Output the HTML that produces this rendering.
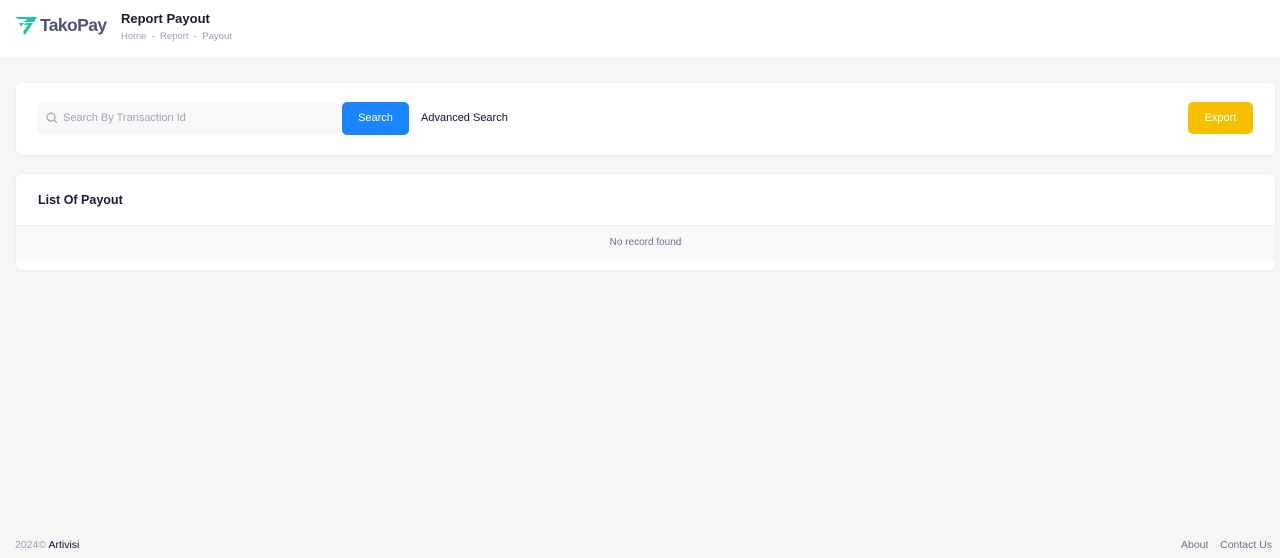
<!DOCTYPE html>
<html><head><style>
*{box-sizing:border-box;margin:0;padding:0}
body{width:1280px;height:558px;background:#f7f5f6;font-family:"Liberation Sans",sans-serif;position:relative;overflow:hidden}
.hdr{position:absolute;left:0;top:0;width:1280px;height:57px;background:#fff}
.logo{position:absolute;left:15px;top:15px}
.logotxt{position:absolute;left:40px;top:15px;font-size:17.5px;color:#4a5578;letter-spacing:-0.6px;font-weight:bold}
.title{position:absolute;left:121px;top:11px;font-size:13px;font-weight:bold;color:#181c32}
.bc{position:absolute;left:121px;top:31px;font-size:9.5px;color:#99a1b7}
.card1{position:absolute;left:16px;top:83px;width:1259px;height:72px;background:#fff;border-radius:6px;box-shadow:0 1px 3px rgba(0,0,0,.06)}
.inp{position:absolute;left:21px;top:19px;width:303px;height:32px;background:#f8f8f8;border-radius:5px;font-size:11px;color:#a1a5b7;padding:10px 0 0 26px}
.btn{position:absolute;left:326px;top:19px;width:67px;height:33px;background:#1b84ff;border-radius:5px;color:#fff;font-size:11px;text-align:center;line-height:33px}
.adv{position:absolute;left:405px;top:29px;font-size:11px;color:#071437}
.exp{position:absolute;left:1172px;top:19px;width:65px;height:32px;background:#f6c000;border-radius:5px;color:#fff;font-size:11px;text-align:center;line-height:32px}
.card2{position:absolute;left:16px;top:174px;width:1259px;height:96px;background:#fff;border-radius:6px;box-shadow:0 1px 3px rgba(0,0,0,.06);overflow:hidden}
.lt{position:absolute;left:22px;top:19px;font-size:12.5px;font-weight:bold;color:#181c32}
.nr{position:absolute;left:0;top:51px;width:1259px;height:36px;background:#f9f9f9;border-top:1px solid #eee;text-align:center;font-size:10px;color:#6c7293;line-height:34px}
.ft{position:absolute;top:539px;font-size:10.5px;color:#99a1b7}
</style></head><body>
<div class="hdr">
<svg class="logo" width="24" height="22" viewBox="0 0 24 22"><path d="M0 2H22L19 7H9L12 4H3Z" fill="#1dc9a0"/><path d="M11 8H18L10 20L8 17L13 10H9Z" fill="#20c997"/><path d="M4 8H9L6 12Z" fill="#2bd4a8"/></svg>
<div class="logotxt">TakoPay</div>
<div class="title">Report Payout</div>
<div class="bc">Home &nbsp;-&nbsp; Report &nbsp;-&nbsp; Payout</div>
</div>
<div class="card1">
<div class="inp"><svg style="position:absolute;left:9px;top:10px" width="12" height="12" viewBox="0 0 12 12"><circle cx="5" cy="5" r="4" fill="none" stroke="#a1a5b7" stroke-width="1.2"/><path d="M8 8L11 11" stroke="#a1a5b7" stroke-width="1.2"/></svg>Search By Transaction Id</div>
<div class="btn">Search</div>
<div class="adv">Advanced Search</div>
<div class="exp">Export</div>
</div>
<div class="card2"><div class="lt">List Of Payout</div><div class="nr">No record found</div></div>
<div class="ft" style="left:15px">2024© <span style="color:#071437">Artivisi</span></div>
<div class="ft" style="left:1181px;color:#6c7293">About &nbsp;&nbsp; Contact Us</div>
</body></html>
